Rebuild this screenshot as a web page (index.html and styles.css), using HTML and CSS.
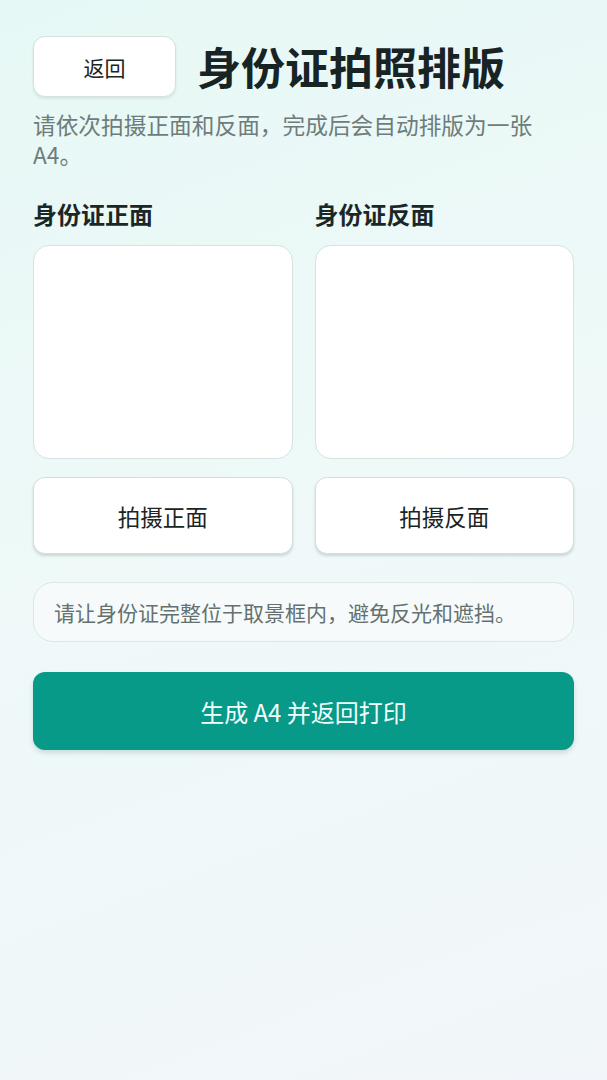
FILE: index.html
```html
<!DOCTYPE html>
<html lang="zh-CN">
<head>
  <meta charset="UTF-8">
  <meta name="viewport" content="width=device-width, initial-scale=1.0">
  <title>身份证拍照排版</title>
  <link rel="stylesheet" href="styles.css">
</head>
<body>
  <div class="page">
    <div class="header">
      <button class="back-button">返回</button>
      <h1 class="title">身份证拍照排版</h1>
    </div>
    <p class="subtitle">请依次拍摄正面和反面，完成后会自动排版为一张A4。</p>

    <div class="sides">
      <div class="side">
        <h2 class="side-label">身份证正面</h2>
        <div class="preview"></div>
        <button class="capture-button">拍摄正面</button>
      </div>
      <div class="side">
        <h2 class="side-label">身份证反面</h2>
        <div class="preview"></div>
        <button class="capture-button">拍摄反面</button>
      </div>
    </div>

    <div class="tip">请让身份证完整位于取景框内，避免反光和遮挡。</div>

    <button class="generate-button">生成 A4 并返回打印</button>
  </div>
</body>
</html>
```

FILE: styles.css
```css
* {
  margin: 0;
  padding: 0;
  box-sizing: border-box;
  font-family: "Noto Sans CJK SC", "Noto Sans", sans-serif;
}

html, body {
  width: 100%;
  height: 100%;
}

body {
  background: linear-gradient(160deg, #e6f8f5 0%, #eef9f8 45%, #f2f6fa 100%);
  color: #1b2727;
}

.page {
  padding: 36px 33px 0;
  display: flex;
  flex-direction: column;
}

.header {
  display: flex;
  align-items: center;
  gap: 21px;
}

button {
  font-family: "Noto Sans CJK SC", "Noto Sans", sans-serif;
  cursor: pointer;
}

.back-button {
  width: 143px;
  height: 61px;
  background: #ffffff;
  border: 1px solid #d6e0df;
  border-radius: 12px;
  box-shadow: 0 2px 3px rgba(0, 0, 0, 0.08);
  font-size: 21px;
  color: #1b2424;
}

.title {
  font-size: 44px;
  font-weight: 700;
  line-height: 61px;
  color: #182424;
}

.subtitle {
  margin-top: 13px;
  font-size: 22.7px;
  line-height: 30px;
  color: #6e7c7b;
}

.sides {
  margin-top: 29px;
  display: grid;
  grid-template-columns: 1fr 1fr;
  gap: 22px;
}

.side {
  display: flex;
  flex-direction: column;
}

.side-label {
  font-size: 24px;
  font-weight: 700;
  line-height: 30px;
  color: #1b2727;
}

.preview {
  margin-top: 16px;
  height: 214px;
  background: #ffffff;
  border: 1px solid #d5e3e1;
  border-radius: 16px;
}

.capture-button {
  margin-top: 18px;
  height: 77px;
  background: #ffffff;
  border: 1px solid #d3dedd;
  border-radius: 12px;
  box-shadow: 0 2px 3px rgba(0, 0, 0, 0.14);
  font-size: 22.5px;
  color: #1b2424;
}

.tip {
  margin-top: 28px;
  height: 60px;
  display: flex;
  align-items: center;
  padding: 0 20px;
  background: #f6fafb;
  border: 1px solid #d9e7e5;
  border-radius: 20px;
  font-size: 21px;
  color: #65716f;
}

.generate-button {
  margin-top: 30px;
  height: 78px;
  background: #079a88;
  border: none;
  border-radius: 12px;
  box-shadow: 0 3px 5px rgba(0, 60, 50, 0.15);
  font-size: 24px;
  color: #f2fffc;
}
```
